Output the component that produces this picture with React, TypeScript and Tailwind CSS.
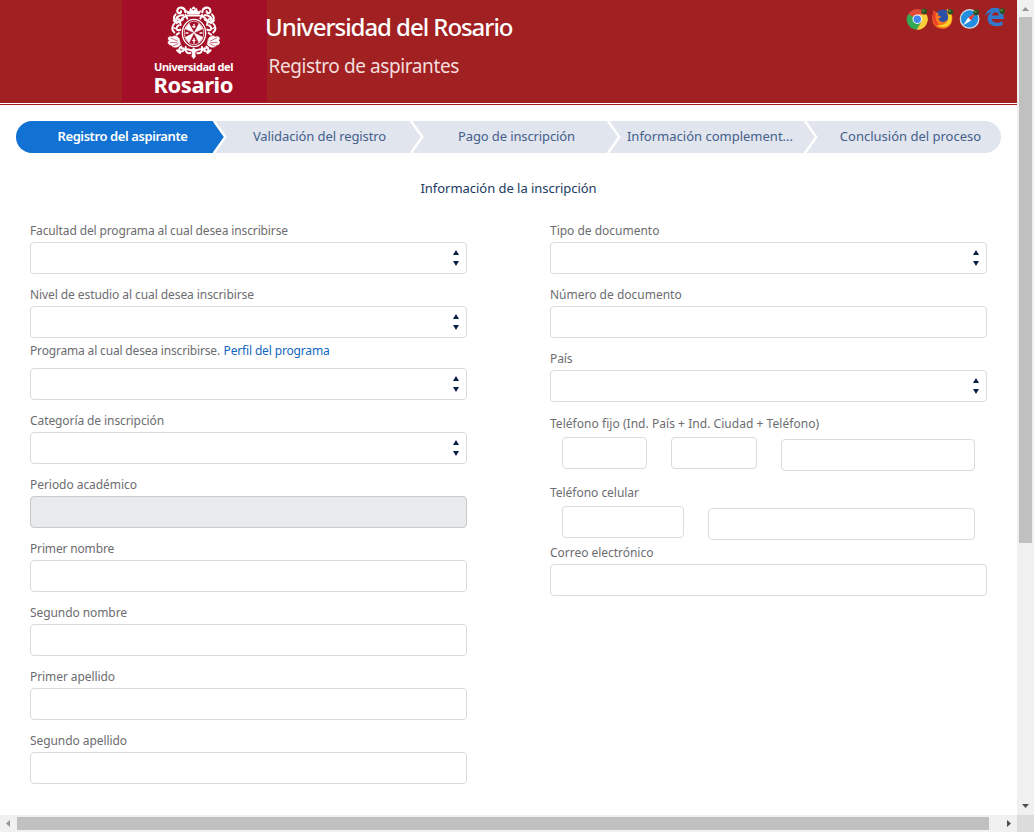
import React from "react";

function Mantling() {
  return (
    <>
      <path d="M76 37 C76 21 55 17 52 31 C50 41 64 42 63 34 M70 46 C56 44 45 54 50 65 C56 70 62 61 56 58" strokeWidth="6.5" />
      <path d="M77 45 L82 56 M74 50 C62 56 58 68 62 75 M47 43 C39 51 42 60 47 66 M43 71 C35 79 34 91 43 97 M56 76 C44 83 51 96 61 89 M57 99 L50 104" strokeWidth="6" />
      <path d="M38 82 L46 86 M40 62 L51 71 M63 24 L73 28 M66 62 L70 58" strokeWidth="4" />
      {/* shell */}
      <path d="M61 134 C52 144 38 144 34 135 C25 136 21 126 28 121 C20 115 27 107 37 111 C42 105 53 109 57 115 Z" fill="#fff" strokeWidth="2" />
      <path d="M33 114 L52 123 M31 127 L51 128 M39 138 L54 131" stroke="#a30f26" strokeWidth="1.8" />
      <path d="M64 140 C54 146 57 158 66 154 C76 150 70 142 66 146 M77 141 C75 153 80 162 91 159 M51 151 L60 159 M82 148 L94 151" strokeWidth="6" />
    </>
  );
}

function Crest() {
  return (
    <svg width="70" height="60" viewBox="0 0 210 180" className="block" fill="none" stroke="#fff" strokeLinecap="round" strokeLinejoin="round">
      {/* crown */}
      <path d="M83 42 L78 32 L88 35 L91 25 L100 32 L110 25 L113 35 L123 32 L118 42 Z" fill="#fff" strokeWidth="2" />
      <path d="M82 47 H120 M98 25 L101 22 L104 25" strokeWidth="5" />
      <Mantling />
      <g transform="translate(203 0) scale(-1 1)"><Mantling /></g>
      {/* shield */}
      <ellipse cx="102" cy="99" rx="35" ry="41" fill="#a30f26" strokeWidth="4" />
      <ellipse cx="102" cy="99" rx="29" ry="35" strokeWidth="2.5" strokeDasharray="3 3" />
      <path d="M102 98 L87 70 L75 86 Z M102 98 L117 70 L129 86 Z M102 98 L75 112 L87 128 Z M102 98 L129 112 L117 128 Z" fill="#fff" strokeWidth="1" />
      <path d="M102 73 V83 M102 115 V129 M98 80 H105 M98 121 H105 M78 99 H84 M120 99 H126" strokeWidth="4" />
      <path d="M92 151 L101 143 L111 151 L105 159 L107 169 L101 177 L95 169 L97 159 Z" fill="#fff" strokeWidth="1" />
    </svg>
  );
}

function Badge({ x, y }: { x: number; y: number }) {
  return (
    <g>
      <circle cx={x} cy={y} r="2.8" fill="#2b4f20" />
      <circle cx={x - 0.7} cy={y - 0.8} r="1.2" fill="#568a3d" />
    </g>
  );
}

function Browsers() {
  return (
    <svg width="102" height="26" viewBox="905 6 102 26" className="block">
      {/* Chrome */}
      <circle cx="917.3" cy="19.2" r="10.3" fill="#e04a3b" />
      <path d="M917.3 19.2 L908.2 14 A10.3 10.3 0 0 0 917 29.6 L922 21.5 Z" fill="#35a853" />
      <path d="M917.3 14.6 H926.6 A10.3 10.3 0 0 1 916.8 29.6 L921.6 21.5 Z" fill="#fbcf3c" />
      <circle cx="917.3" cy="19.2" r="4.8" fill="#f4f4f4" />
      <circle cx="917.3" cy="19.2" r="3.7" fill="#4285f0" />
      <Badge x={924.2} y={11.4} />
      {/* Firefox */}
      <circle cx="943" cy="18.3" r="8.8" fill="#2b4fa5" />
      <path d="M934 10 C934.5 12 936 12.8 938.5 13 L938 15.2 L941.4 17 L938.5 18.8 C940 22.6 944 22.7 946.8 20.5 C949 18.5 948.3 14.8 946.2 12.4 C948.5 12.5 949.5 14 950 15 C950 12 948.5 10 947 9 C951 10 952.3 14 952.4 18.2 C952.6 24 948.3 28.8 942.6 28.8 C936.5 28.8 932.6 24.6 932.4 19 C932.3 15.5 933 13 934 10 Z" fill="#f8791f" />
      <path d="M946.5 8.8 C951.8 12 953 18 950.6 23 C947.4 28.2 941 28 937.6 25 C943 26 947.6 23.4 948.2 18.6 C948.6 15 947.6 12.4 946.5 8.8 Z" fill="#ffd12b" />
      <path d="M933.8 11 C932 16 932.5 21 936 25.4 L939 24.6 C935.6 21 935 17 936 13 Z" fill="#ef3d2b" />
      <Badge x={950.4} y={11.8} />
      {/* Safari */}
      <circle cx="969.6" cy="18.9" r="9.9" fill="#d8dfe4" />
      <circle cx="969.6" cy="18.9" r="8.6" fill="#218ee2" />
      <path d="M976 12.5 L971.1 20.4 L968.2 17.5 Z" fill="#ef3c35" />
      <path d="M963.2 25.3 L968.2 17.5 L971.1 20.4 Z" fill="#fff" />
      <Badge x={976.2} y={12.4} />
      {/* Edge */}
      <g transform="translate(-0.6 -0.3)">
        <path d="M985.6 16.5 C987 10.8 991 7.8 996 8 C1001.4 8.3 1004.3 12 1004.3 17 V19.4 H992.4 C992.7 22.2 995 23.2 998 23.1 C1000.2 23 1001.9 22.4 1003.2 21.6 V25.3 C1000.5 26.4 998 26.8 995.2 26.3 C990.5 25.6 987.8 22 988.2 18.2 C988.5 15.5 990 13.6 992.4 12.4 C989.8 12.8 987.5 14.2 985.6 16.5 Z M992.6 15.8 H999.3 C999.2 13.7 998.2 12.5 996.2 12.5 C994.2 12.5 993 13.8 992.6 15.8 Z" fill="#3079cb" fillRule="evenodd" />
        <Badge x={1002.8} y={11.4} />
      </g>
    </svg>
  );
}

function Header() {
  return (
    <header className="flex h-[103px] bg-[#a12122]">
      <div className="ml-[122px] h-[102px] w-[145px] shrink-0 bg-[#a30f26] text-white">
        <div className="pl-[38px]"><Crest /></div>
        <div className="h-[14px] pl-8 text-[11px] leading-[14px] font-bold tracking-[-0.43px] whitespace-nowrap">Universidad del</div>
        <div className="h-[20px] pl-[31.5px] text-[22px] leading-[20px] font-bold tracking-[-0.44px]">Rosario</div>
      </div>
      <div className="-ml-[2px] flex-1 whitespace-nowrap">
        <div className="h-[54px] text-[24px] leading-[54px] font-medium tracking-[-1.05px] text-white">Universidad del Rosario</div>
        <div className="pl-[3.5px] text-[19px] leading-[24px] tracking-[-0.4px] text-[#f4dddd]">Registro de aspirantes</div>
      </div>
      <div className="mr-[10px] pt-[6px]"><Browsers /></div>
    </header>
  );
}

const steps = [
  { name: "Registro del aspirante", cls: "w-[197px] rounded-l-full bg-[#1172d3] pl-[16px] font-semibold tracking-[-0.41px] text-white" },
  { name: "Validación del registro", cls: "w-[197px] pl-[16px] tracking-[-0.1px] text-[#46608b]" },
  { name: "Pago de inscripción", cls: "w-[197px] pl-[16px] tracking-[-0.12px] text-[#46608b]" },
  { name: "Información complement...", cls: "w-[197px] pl-[9px] text-[#46608b]" },
  { name: "Conclusión del proceso", cls: "w-[197px] rounded-r-full pl-[16px] text-[#46608b]" },
];

function Steps() {
  return (
    <ol className="mt-[16px] ml-4 flex h-8 w-[985px] rounded-full bg-[#e0e5ee]">
      {steps.map((s, i) => (
        <li key={s.name} className={`relative flex h-8 items-center justify-center pb-[2px] text-[13px] leading-[30px] whitespace-nowrap ${s.cls}`}>
          <span>{s.name}</span>
          {i < 4 && (
            <svg className="absolute top-0 left-full" width="15" height="32" viewBox="0 0 15 32">
              <path d="M0 0 L11.5 16 L0 32 Z" fill={i === 0 ? "#1172d3" : "#e0e5ee"} />
              <path d="M-0.4 -2 L12.3 16 L-0.4 34" fill="none" stroke="#fff" strokeWidth="2.4" />
            </svg>
          )}
        </li>
      ))}
    </ol>
  );
}

function Box({ cls = "", select = false }: { cls?: string; select?: boolean }) {
  return (
    <div className={`flex h-8 items-center justify-end rounded-[4px] border pr-[6px] ${cls || "border-[#dbdbdb] bg-white"}`}>
      {select && (
        <svg width="8" height="16" viewBox="0 0 8 16">
          <path d="M4 0 L7 5 H1 Z M1 11 H7 L4 16 Z" fill="#081f45" />
        </svg>
      )}
    </div>
  );
}

function Label({ text, track }: { text: string; track: string }) {
  return <div className={`h-5 text-[12px] leading-[17px] whitespace-nowrap text-[#6c6d70] ${track}`}>{text}</div>;
}

const top = [
  { text: "Facultad del programa al cual desea inscribirse", track: "tracking-[-0.13px]" },
  { text: "Nivel de estudio al cual desea inscribirse", track: "tracking-[-0.08px]" },
];
const names = [
  { text: "Primer nombre", track: "tracking-[-0.16px]" },
  { text: "Segundo nombre", track: "tracking-[-0.08px]" },
  { text: "Primer apellido", track: "tracking-[-0.08px]" },
  { text: "Segundo apellido", track: "tracking-[-0.07px]" },
];

export default function App() {
  return (
    <div className="grid h-[832px] w-[1034px] grid-cols-[1017px_17px] grid-rows-[815px_17px] overflow-hidden bg-white font-['Noto_Sans','Open_Sans',sans-serif]">
      <main className="overflow-hidden">
        <Header />
        <div className="mt-px h-px bg-[#a51d20]" />
        <Steps />
        <h1 className="mt-[25px] ml-[420.5px] h-5 text-[13px] leading-5 tracking-[-0.04px] text-[#213b62]">Información de la inscripción</h1>
        <div className="mt-6 ml-[30px] grid grid-cols-[437px_437px] gap-x-[83px]">
          <div className="flex flex-col">
            <div className="flex flex-col gap-3">
              {top.map((f) => (
                <div key={f.text}><Label {...f} /><Box select /></div>
              ))}
            </div>
            <div className="mt-1 flex h-[26px] gap-[3.5px] text-[12px] leading-[17px] whitespace-nowrap">
              <span className="tracking-[-0.17px] text-[#6c6d70]">Programa al cual desea inscribirse.</span>
              <a className="tracking-[-0.15px] text-[#1268c0]">Perfil del programa</a>
            </div>
            <Box select />
            <div className="mt-3 flex flex-col gap-3">
              <div><Label text="Categoría de inscripción" track="tracking-[-0.09px]" /><Box select /></div>
              <div><Label text="Periodo académico" track="tracking-[-0.05px]" /><Box cls="border-[#c9cacc] bg-[#e9eaec]" /></div>
              {names.map((f) => (
                <div key={f.text}><Label {...f} /><Box /></div>
              ))}
            </div>
          </div>
          <div className="flex flex-col">
            <div className="flex flex-col gap-3">
              <div><Label text="Tipo de documento" track="tracking-[-0.01px]" /><Box select /></div>
              <div><Label text="Número de documento" track="tracking-[0px]" /><Box /></div>
              <div><Label text="País" track="tracking-[-0.1px]" /><Box select /></div>
            </div>
            <div className="mt-[13px] h-[22px]"><Label text="Teléfono fijo (Ind. País + Ind. Ciudad + Teléfono)" track="tracking-[0.04px]" /></div>
            <div className="grid grid-cols-[85px_86px_194px] gap-x-6 px-3">
              <Box /><Box /><div className="pt-[2px]"><Box /></div>
            </div>
            <div className="mt-[13px] h-[22px]"><Label text="Teléfono celular" track="tracking-[-0.03px]" /></div>
            <div className="grid grid-cols-[122px_267px] gap-x-6 px-3">
              <Box /><div className="pt-[2px]"><Box /></div>
            </div>
            <div className="mt-1"><Label text="Correo electrónico" track="tracking-[-0.03px]" /><Box /></div>
          </div>
        </div>
      </main>
      <div className="flex flex-col items-center justify-between bg-[#f0f0f0]">
        <div className="flex flex-col items-center">
          <svg width="17" height="17"><path d="M5 11 H12 L8.5 7 Z" fill="#969696" /></svg>
          <div className="h-[526px] w-[13px] bg-[#c0c0c0]" />
        </div>
        <svg width="17" height="17"><path d="M5 6 H12 L8.5 10 Z" fill="#4d4d4d" /></svg>
      </div>
      <div className="flex items-center bg-[#f0f0f0]">
        <svg width="17" height="17"><path d="M10 5 V12 L6 8.5 Z" fill="#969696" /></svg>
        <div className="h-[13px] w-[972px] bg-[#c0c0c0]" />
        <svg className="ml-auto" width="17" height="17"><path d="M7 5 V12 L11 8.5 Z" fill="#4d4d4d" /></svg>
      </div>
      <div className="bg-[#dcdcdc]" />
    </div>
  );
}
